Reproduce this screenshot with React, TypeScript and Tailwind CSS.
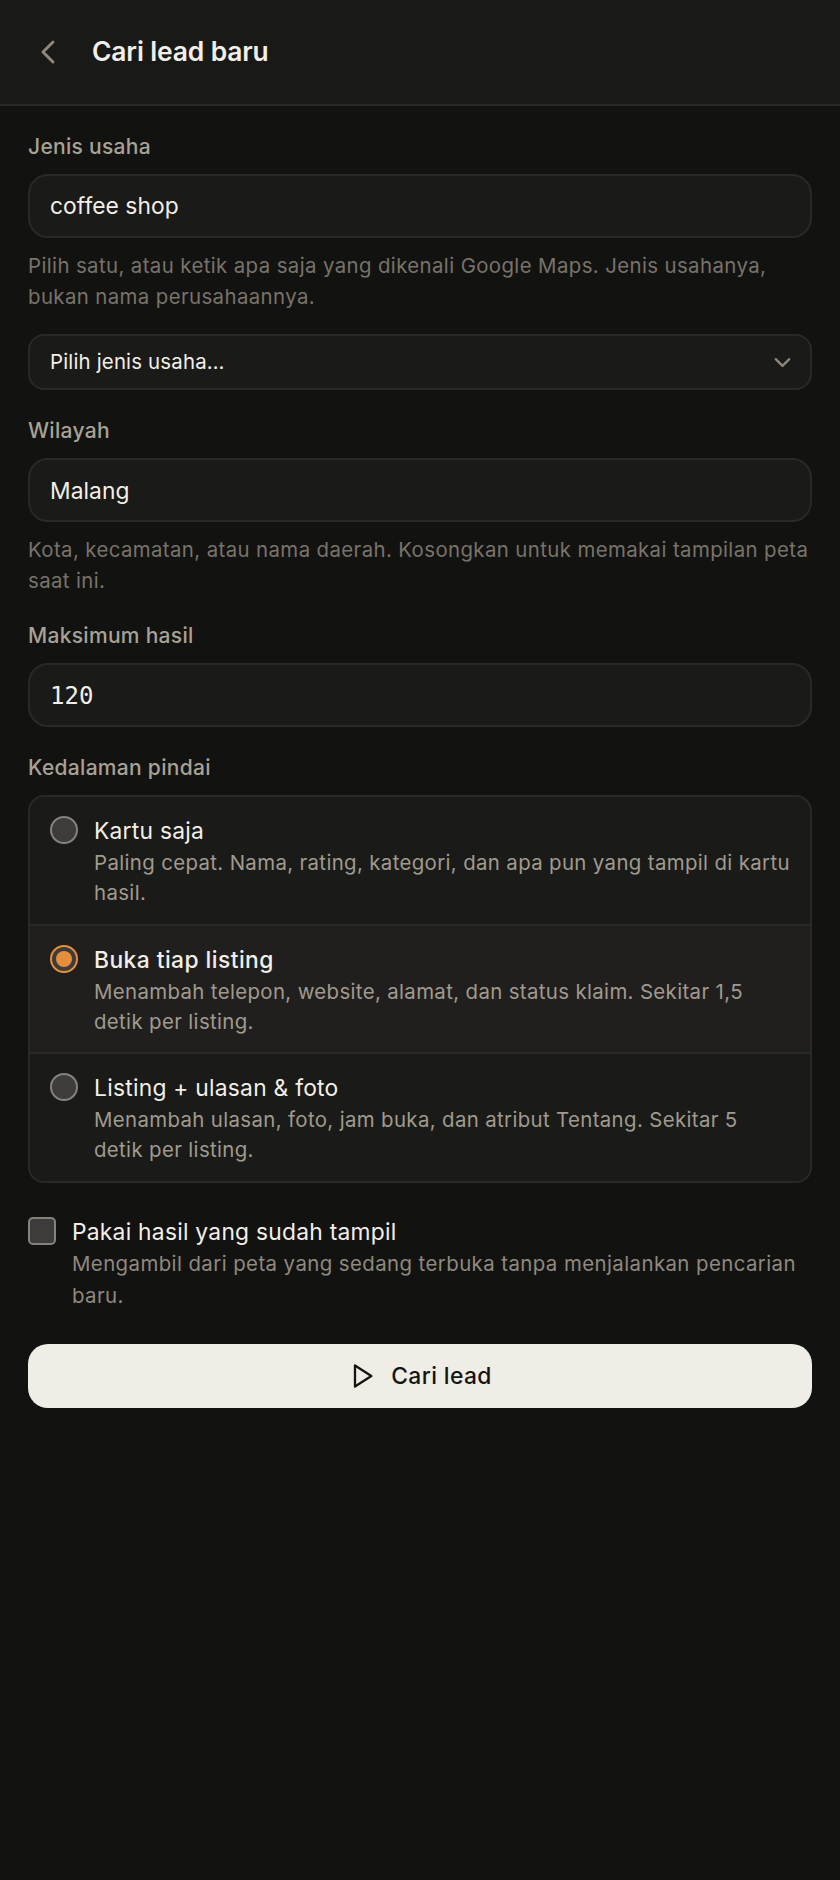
const sans = "font-['Inter',sans-serif]"

const depths = [
  { title: 'Kartu saja', desc: 'Paling cepat. Nama, rating, kategori, dan apa pun yang tampil di kartu hasil.', active: false },
  { title: 'Buka tiap listing', desc: 'Menambah telepon, website, alamat, dan status klaim. Sekitar 1,5 detik per listing.', active: true },
  { title: 'Listing + ulasan & foto', desc: 'Menambah ulasan, foto, jam buka, dan atribut Tentang. Sekitar 5 detik per listing.', active: false },
]

function Label({ children }: { children: string }) {
  return <div className="text-[21px] leading-[26px] font-medium tracking-[0.3px] text-[#a8a296]">{children}</div>
}

function Field({ value, mono }: { value: string; mono?: boolean }) {
  return (
    <div className={`mt-[14px] flex h-[64px] items-center rounded-[20px] border-2 border-[#2a2927] bg-[#1a1a18] px-[20px] pt-[1px] text-[#f2efe8] ${mono ? "font-['DejaVu_Sans_Mono',monospace] text-[24px]" : 'text-[22.8px] tracking-[0.05px]'}`}>
      {value}
    </div>
  )
}

function Hint({ children }: { children: string }) {
  return <p className="mt-[13px] text-[20.4px] leading-[30.6px] tracking-[0.39px] text-[#78736a]">{children}</p>
}

export default function App() {
  return (
    <div className={`${sans} min-h-[1880px] w-[840px] bg-[#121211]`}>
      <header className="flex h-[106px] items-center border-b-2 border-[#2a2927] bg-[#191918] pl-[28px]">
        <svg width="40" height="40" viewBox="0 0 24 24" fill="none" stroke="#8d877c" strokeWidth="1.75" strokeLinecap="round" strokeLinejoin="round">
          <path d="m15 18-6-6 6-6" />
        </svg>
        <h1 className="ml-[24px] text-[26.4px] font-semibold tracking-[-0.13px] text-[#f2efe8]">Cari lead baru</h1>
      </header>

      <main className="px-[28px] pt-[28px]">
        <Label>Jenis usaha</Label>
        <Field value="coffee shop" />
        <Hint>Pilih satu, atau ketik apa saja yang dikenali Google Maps. Jenis usahanya, bukan nama perusahaannya.</Hint>

        <div className="mt-[22px] flex h-[56px] items-center justify-between rounded-[16px] border-2 border-[#2a2927] bg-[#1a1a18] pl-[20px] pr-[14px] text-[20.4px] tracking-[0.18px] text-[#f2efe8]">
          <span>Pilih jenis usaha…</span>
          <svg width="27" height="27" viewBox="0 0 24 24" fill="none" stroke="#8d877c" strokeWidth="2" strokeLinecap="round" strokeLinejoin="round">
            <path d="m6 9 6 6 6-6" />
          </svg>
        </div>

        <div className="mt-[28px]"><Label>Wilayah</Label></div>
        <Field value="Malang" />
        <Hint>Kota, kecamatan, atau nama daerah. Kosongkan untuk memakai tampilan peta saat ini.</Hint>

        <div className="mt-[27px]"><Label>Maksimum hasil</Label></div>
        <Field value="120" mono />

        <div className="mt-[28px]"><Label>Kedalaman pindai</Label></div>
        <div className="mt-[14px] overflow-hidden rounded-[16px] border-2 border-[#2a2927] bg-[#1a1a18]">
          {depths.map((d, i) => (
            <div key={d.title} className={`flex gap-[16px] px-[20px] pb-[15.5px] pt-[19px] ${i > 0 ? 'border-t-2 border-[#2a2927]' : ''} ${d.active ? 'bg-[#201f1e]' : ''}`}>
              {d.active ? (
                <span className="flex h-[28px] w-[28px] shrink-0 items-center justify-center rounded-full border-2 border-[#e58e3b] bg-[#3d3c3a]">
                  <span className="h-[16px] w-[16px] rounded-full bg-[#e58e3b]" />
                </span>
              ) : (
                <span className="h-[28px] w-[28px] shrink-0 rounded-full border-2 border-[#85827c] bg-[#3d3c3a]" />
              )}
              <div>
                <div className={`text-[22.8px] leading-[30px] text-[#f2efe8] ${d.active ? 'font-medium tracking-[0.45px]' : 'tracking-[0.25px]'}`}>{d.title}</div>
                <div className="mt-[2px] text-[20.4px] leading-[30px] tracking-[0.36px] text-[#a09a8e]">{d.desc}</div>
              </div>
            </div>
          ))}
        </div>

        <div className="mt-[34px] flex gap-[16px]">
          <span className="h-[28px] w-[28px] shrink-0 rounded-[5px] border-2 border-[#85827c] bg-[#3d3c3a]" />
          <div>
            <div className="text-[22.8px] leading-[30px] tracking-[0.25px] text-[#f2efe8]">Pakai hasil yang sudah tampil</div>
            <div className="mt-[1px] text-[20.4px] leading-[32px] tracking-[0.42px] text-[#8f897e]">Mengambil dari peta yang sedang terbuka tanpa menjalankan pencarian baru.</div>
          </div>
        </div>

        <button className="mt-[32px] flex h-[64px] w-full items-center justify-center gap-[15px] rounded-[20px] bg-[#f0ede6] text-[22.8px] font-medium tracking-[0.4px] text-[#141413]">
          <svg width="28" height="28" viewBox="0 0 24 24" fill="none" stroke="currentColor" strokeWidth="2" strokeLinecap="round" strokeLinejoin="round">
            <polygon points="6 3 20 12 6 21 6 3" />
          </svg>
          Cari lead
        </button>
      </main>
    </div>
  )
}
